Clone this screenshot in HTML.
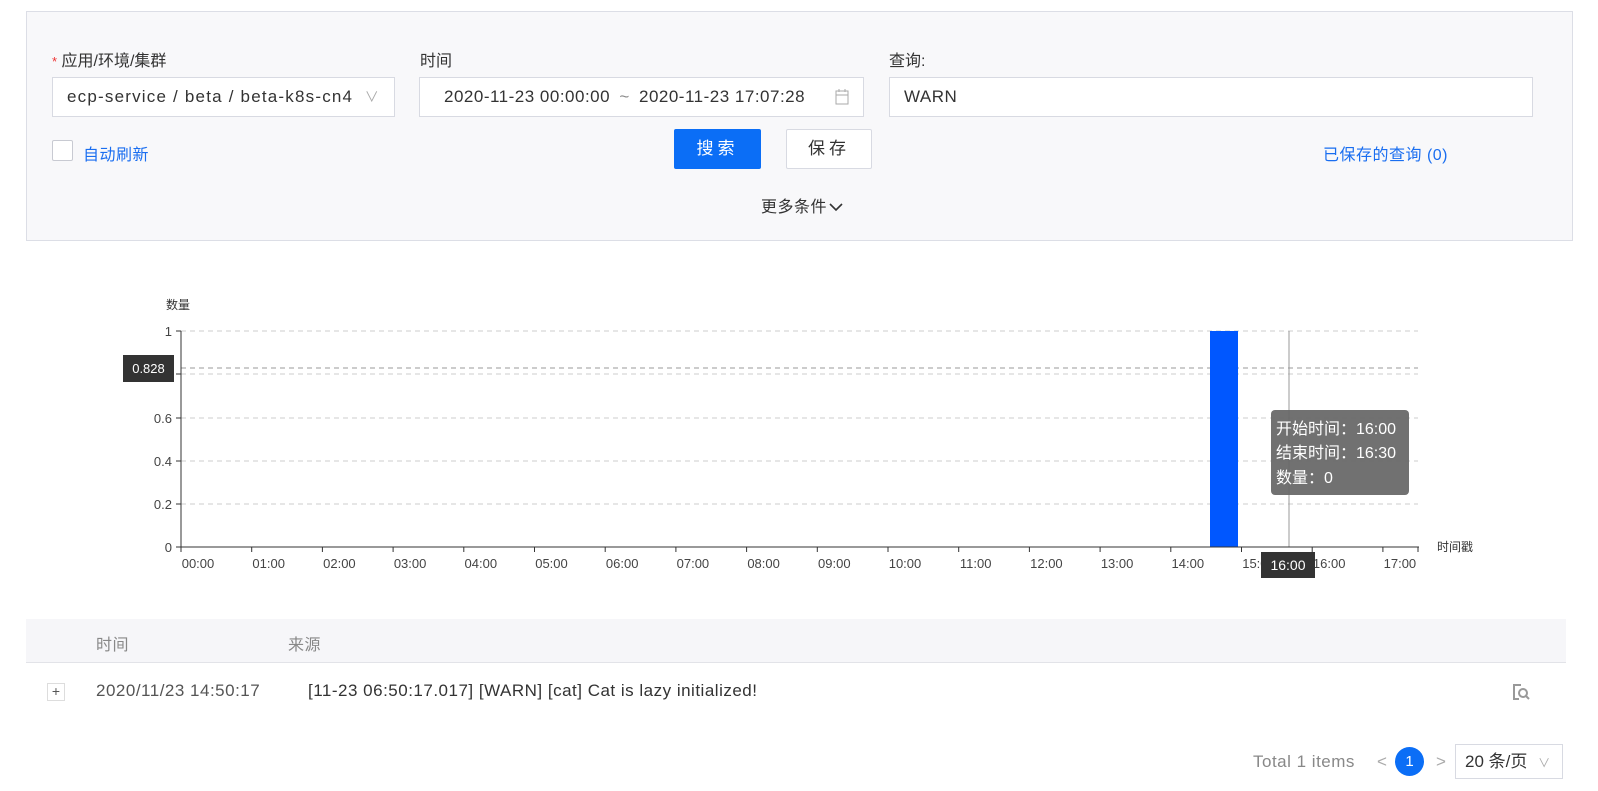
<!DOCTYPE html>
<html><head><meta charset="utf-8"><style>
*{box-sizing:border-box;margin:0;padding:0}
body{width:1598px;height:791px;background:#fff;font-family:"Liberation Sans","Noto Sans CJK SC",sans-serif;color:#333;font-size:17px;letter-spacing:0.5px;position:relative;overflow:hidden}
.a{position:absolute}
.panel{left:26px;top:11px;width:1547px;height:230px;background:#f8f8fa;border:1px solid #dcdee6}
.inp{background:#fff;border:1px solid #d8dae2;height:40px;line-height:38px;padding-left:14px;color:#333}
.lbl{top:47px;font-size:16px;color:#333;letter-spacing:0}
.btn{height:40px;line-height:40px;text-align:center;font-size:17px;letter-spacing:4px}
</style></head><body>
<div class="a panel"></div>
<div class="a lbl" style="left:52px"><span style="color:#e33;font-size:13px">*</span> 应用/环境/集群</div>
<div class="a lbl" style="left:420px">时间</div>
<div class="a lbl" style="left:889px">查询:</div>
<div class="a inp" style="left:52px;top:77px;width:343px;letter-spacing:1.2px">ecp-service / beta / beta-k8s-cn4<span style="position:absolute;right:14px;color:#aaa;font-size:14px">∨</span></div>
<div class="a inp" style="left:419px;top:77px;width:445px;padding-left:24px">2020-11-23 00:00:00 <span style="color:#888;margin:0 4px">~</span> 2020-11-23 17:07:28
<svg style="position:absolute;right:14px;top:11px" width="14" height="16" viewBox="0 0 14 16"><rect x="1" y="2" width="12" height="13" fill="none" stroke="#aaa"/><line x1="1" y1="6" x2="13" y2="6" stroke="#aaa"/><line x1="4" y1="0" x2="4" y2="3" stroke="#aaa"/><line x1="10" y1="0" x2="10" y2="3" stroke="#aaa"/></svg></div>
<div class="a inp" style="left:889px;top:77px;width:644px">WARN</div>
<div class="a" style="left:52px;top:140px;width:21px;height:21px;border:1px solid #c8cad2;border-radius:2px;background:#fff"></div>
<div class="a" style="left:83px;top:141px;color:#1a6ef0;font-size:16px">自动刷新</div>
<div class="a btn" style="left:674px;top:129px;width:87px;background:#0b6ef6;color:#fff;border-radius:2px">搜索</div>
<div class="a btn" style="left:786px;top:129px;width:86px;background:#fff;border:1px solid #d8dae2;border-radius:2px;line-height:38px">保存</div>
<div class="a" style="left:1323px;top:141px;color:#1a6ef0;font-size:16px">已保存的查询 (0)</div>
<div class="a" style="left:761px;top:193px;font-size:16px">更多条件<svg width="14" height="10" style="margin-left:2px" viewBox="0 0 14 10"><path d="M1 2 L7 8 L13 2" fill="none" stroke="#333" stroke-width="1.6"/></svg></div>

<svg class="a" style="left:0;top:0;letter-spacing:0" width="1598" height="600" font-family="Liberation Sans, Noto Sans CJK SC, sans-serif">
<g stroke="#ccc" stroke-dasharray="5,4">
<line x1="181" y1="331" x2="1418" y2="331"/><line x1="181" y1="374" x2="1418" y2="374"/><line x1="181" y1="418" x2="1418" y2="418"/><line x1="181" y1="461" x2="1418" y2="461"/><line x1="181" y1="504" x2="1418" y2="504"/>
</g>
<line x1="181" y1="368" x2="1418" y2="368" stroke="#999" stroke-dasharray="5,4"/>
<rect x="1210" y="331" width="28" height="216" fill="#0057ff"/>
<line x1="1289" y1="331" x2="1289" y2="547" stroke="#999"/>
<line x1="181" y1="331" x2="181" y2="548" stroke="#333"/>
<line x1="181" y1="547" x2="1419" y2="547" stroke="#333"/>
<g stroke="#333">
<line x1="176" y1="331" x2="181" y2="331"/><line x1="176" y1="374" x2="181" y2="374"/><line x1="176" y1="418" x2="181" y2="418"/><line x1="176" y1="461" x2="181" y2="461"/><line x1="176" y1="504" x2="181" y2="504"/><line x1="176" y1="547" x2="181" y2="547"/>
<path d="M181 547v5M251.7 547v5M322.4 547v5M393.1 547v5M463.8 547v5M534.5 547v5M605.2 547v5M675.9 547v5M746.6 547v5M817.3 547v5M888 547v5M958.7 547v5M1029.4 547v5M1100.1 547v5M1170.8 547v5M1241.5 547v5M1312.2 547v5M1382.9 547v5M1418 547v5"/>
</g>
<g font-size="13" fill="#444" text-anchor="end">
<text x="172" y="336">1</text><text x="172" y="423">0.6</text><text x="172" y="466">0.4</text><text x="172" y="509">0.2</text><text x="172" y="552">0</text>
</g>
<text x="166" y="309" font-size="12" fill="#333">数量</text>
<text x="1437" y="551" font-size="12" fill="#333">时间戳</text>
<g font-size="13" fill="#444" text-anchor="middle">
<text x="198" y="568">00:00</text><text x="268.7" y="568">01:00</text><text x="339.4" y="568">02:00</text><text x="410.1" y="568">03:00</text><text x="480.8" y="568">04:00</text><text x="551.5" y="568">05:00</text><text x="622.2" y="568">06:00</text><text x="692.9" y="568">07:00</text><text x="763.6" y="568">08:00</text><text x="834.3" y="568">09:00</text><text x="905" y="568">10:00</text><text x="975.7" y="568">11:00</text><text x="1046.4" y="568">12:00</text><text x="1117.1" y="568">13:00</text><text x="1187.8" y="568">14:00</text><text x="1258.5" y="568">15:00</text><text x="1329.2" y="568">16:00</text><text x="1399.9" y="568">17:00</text>
</g>
<rect x="1261" y="552" width="54" height="26" fill="#333"/>
<text x="1288" y="570" font-size="14" fill="#fff" text-anchor="middle">16:00</text>
<rect x="123" y="355" width="51" height="27" fill="#333"/>
<text x="148.5" y="373" font-size="13" fill="#fff" text-anchor="middle">0.828</text>
<rect x="1271" y="410" width="138" height="85" rx="4" fill="#666" opacity="0.93"/>
<g font-size="16" fill="#fff"><text x="1276" y="434">开始时间：16:00</text><text x="1276" y="458">结束时间：16:30</text><text x="1276" y="483">数量：0</text></g>
</svg>

<div class="a" style="left:26px;top:619px;width:1540px;height:44px;background:#f6f6f9;border-bottom:1px solid #e2e3e8"></div>
<div class="a" style="left:96px;top:631px;color:#888;font-size:16px">时间</div>
<div class="a" style="left:288px;top:631px;color:#888;font-size:16px">来源</div>
<div class="a" style="left:47px;top:683px;width:18px;height:18px;border:1px solid #ddd;text-align:center;line-height:15px;font-size:14px;color:#555;letter-spacing:0">+</div>
<div class="a" style="left:96px;top:681px;color:#555">2020/11/23 14:50:17</div>
<div class="a" style="left:308px;top:681px;color:#333">[11-23 06:50:17.017] [WARN] [cat] Cat is lazy initialized!</div>
<svg class="a" style="left:1512px;top:683px" width="18" height="18" viewBox="0 0 18 18"><path d="M9 2H2V16H7" fill="none" stroke="#999" stroke-width="2"/><circle cx="11" cy="10" r="4" fill="none" stroke="#999" stroke-width="2"/><line x1="14" y1="13" x2="17" y2="16" stroke="#999" stroke-width="2"/></svg>
<div class="a" style="left:1253px;top:752px;color:#888">Total 1 items</div>
<div class="a" style="left:1377px;top:752px;color:#aaa">&lt;</div>
<div class="a" style="left:1395px;top:747px;width:29px;height:29px;border-radius:50%;background:#0b6ef6;color:#fff;text-align:center;line-height:29px;font-size:15px;letter-spacing:0">1</div>
<div class="a" style="left:1436px;top:752px;color:#aaa">&gt;</div>
<div class="a" style="left:1455px;top:744px;width:108px;height:35px;border:1px solid #d8dae2;line-height:33px;padding-left:9px;letter-spacing:0">20 条/页 <span style="color:#aaa;font-size:12px;margin-left:6px">∨</span></div>
</body></html>
